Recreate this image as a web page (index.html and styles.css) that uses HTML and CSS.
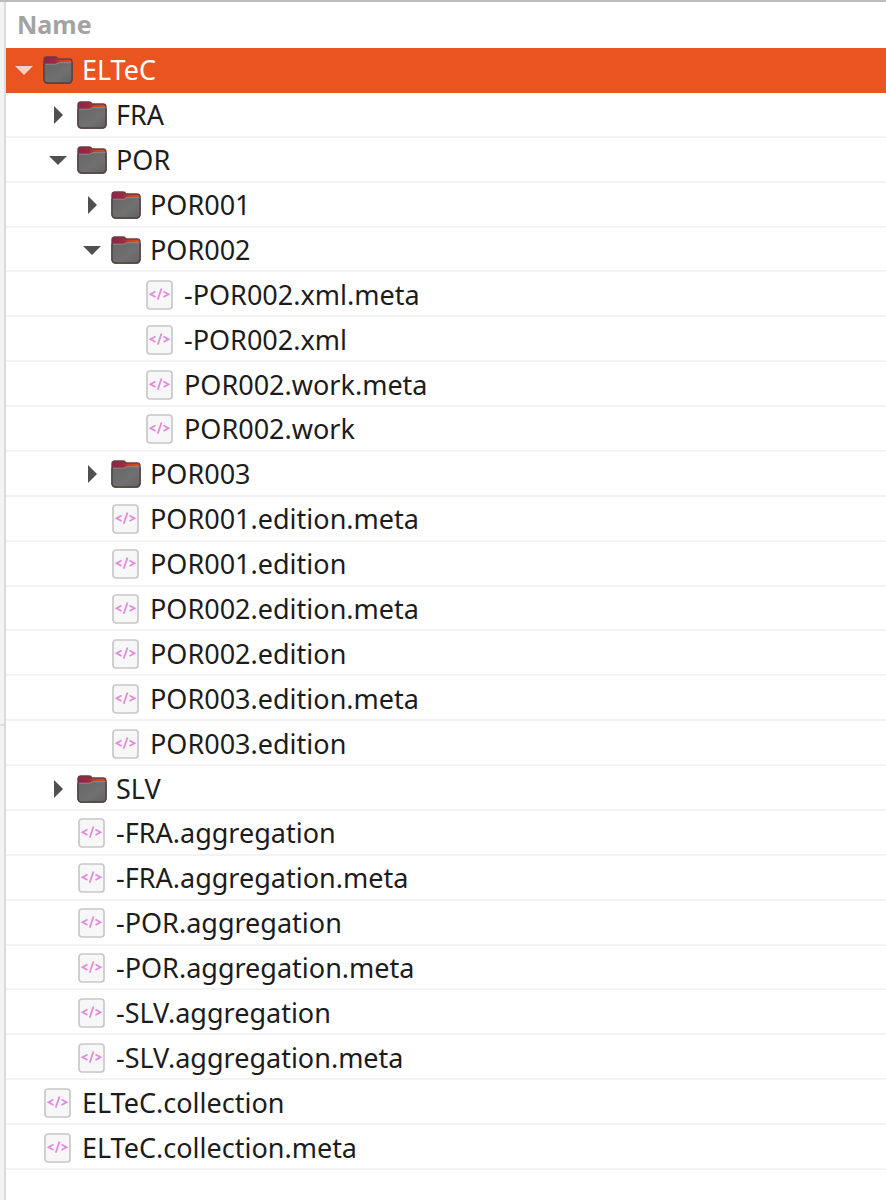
FILE: index.html
```
<!DOCTYPE html>
<html lang="en">
<head>
<meta charset="utf-8">
<title>ELTeC</title>
<link rel="stylesheet" href="styles.css">
</head>
<body>
<svg class="symbols" aria-hidden="true">
  <defs>
    <linearGradient id="tab" x1="0" x2="1" y1="0" y2="0">
      <stop offset="0" stop-color="#90234c"/><stop offset=".4" stop-color="#9c2a40"/><stop offset=".6" stop-color="#c64022"/><stop offset="1" stop-color="#dc4e22"/>
    </linearGradient>
    <linearGradient id="front" x1="0" x2="1" y1="0" y2="1">
      <stop offset="0" stop-color="#666"/><stop offset=".6" stop-color="#707070"/><stop offset="1" stop-color="#626262"/>
    </linearGradient>
  </defs>
  <symbol id="folder" viewBox="0 0 32 32">
    <path d="M2 6Q2 3 5 3H13Q15 3 16 5H27Q30 5 30 8V25Q30 29 26 29H6Q2 29 2 25Z" fill="url(#tab)" stroke="#6b3c40" stroke-width="1.400"/>
    <path d="M2 10H13Q15 10 16 8.500H30V25Q30 29 26 29H6Q2 29 2 25Z" fill="url(#front)"/>
    <path d="M2 10V25Q2 29 6 29H26Q30 29 30 25V9" fill="none" stroke="#4f4344" stroke-width="1.400"/>
    <path d="M3 10.200H13.500Q15 10.200 16.500 8.700H29" fill="none" stroke="#92898a" stroke-width="1"/>
  </symbol>
  <symbol id="file" viewBox="0 0 32 32">
    <rect x="3" y="2" width="25" height="28" rx="3" fill="#f7f7f7" stroke="#c8c8c8" stroke-width="1.700"/>
    <path d="M11.500 12.500L6.500 15.200L11.500 18M19.500 12.500L24.500 15.200L19.500 18M17.500 9.500L13.700 20.800" fill="none" stroke="#e48ade" stroke-width="1.800"/>
  </symbol>
  <symbol id="right" viewBox="0 0 20 20"><path d="M6 1L15 10L6 19Z" fill="#505050"/></symbol>
  <symbol id="down" viewBox="0 0 20 20"><path d="M1 6H19L10 15Z" fill="currentColor"/></symbol>
</svg>
<div class="window">
  <aside class="edge"><div class="edge-top"></div><div class="edge-bottom"></div></aside>
  <main class="pane">
    <h1 class="heading">Name</h1>
    <ul class="tree" id="tree" role="tree" aria-label="Name"></ul>
  </main>
</div>
<script src="tree.js"></script>
</body>
</html>
```
FILE: styles.css
```
* { box-sizing: border-box; }
body {
  margin: 0;
  background: #fff;
  color: #1c1c1c;
  font-family: "Noto Sans", "Open Sans", sans-serif;
  font-size: 27px;
}
.symbols { position: absolute; width: 0; height: 0; }
.window {
  display: flex;
  min-height: 100vh;
  border-top: 2px solid #bcbcbc;
}
.edge {
  display: flex;
  flex-direction: column;
  width: 6px;
  background: #f4f4f4;
  border-right: 2px solid #dcdcdc;
}
.edge-top { flex: 723; border-bottom: 2px solid #dedede; }
.edge-bottom { flex: 475; }
.pane {
  display: flex;
  flex: 1;
  flex-direction: column;
  min-width: 0;
  padding-bottom: 30px;
}
.heading {
  margin: 0;
  padding: 0 0 2px 11px;
  color: #a3a3a3;
  font-size: 25px;
  font-weight: 700;
  line-height: 44px;
}
.tree {
  display: grid;
  flex: 1;
  grid-auto-rows: 1fr;
  margin: 0;
  padding: 0;
  list-style: none;
}
.row {
  display: flex;
  align-items: center;
  padding-top: 2px;
  padding-left: 2px;
  border-bottom: 2px solid #f3f3f3;
  line-height: 36px;
  white-space: nowrap;
}
.level-1 { padding-left: 36px; }
.level-2 { padding-left: 70px; }
.level-3 { padding-left: 104px; }
.selected {
  background: #e95420;
  border-color: #e95420;
  color: #fff;
}
.toggle, .spacer { flex: none; width: 34px; height: 20px; }
.toggle {
  padding: 0 8px 0 6px;
  border: 0;
  background: none;
  color: #505050;
}
.selected .toggle { color: #fbd0bf; }
.arrow { display: block; width: 20px; height: 20px; }
.icon { flex: none; width: 32px; height: 32px; margin-right: 8px; }
```
FILE: tree.js
```
const entries = [
  [0, "open", "ELTeC"],
  [1, "closed", "FRA"],
  [1, "open", "POR"],
  [2, "closed", "POR001"],
  [2, "open", "POR002"],
  [3, "file", "-POR002.xml.meta"],
  [3, "file", "-POR002.xml"],
  [3, "file", "POR002.work.meta"],
  [3, "file", "POR002.work"],
  [2, "closed", "POR003"],
  [2, "file", "POR001.edition.meta"],
  [2, "file", "POR001.edition"],
  [2, "file", "POR002.edition.meta"],
  [2, "file", "POR002.edition"],
  [2, "file", "POR003.edition.meta"],
  [2, "file", "POR003.edition"],
  [1, "closed", "SLV"],
  [1, "file", "-FRA.aggregation"],
  [1, "file", "-FRA.aggregation.meta"],
  [1, "file", "-POR.aggregation"],
  [1, "file", "-POR.aggregation.meta"],
  [1, "file", "-SLV.aggregation"],
  [1, "file", "-SLV.aggregation.meta"],
  [0, "file", "ELTeC.collection"],
  [0, "file", "ELTeC.collection.meta"]
];

document.getElementById("tree").innerHTML = entries.map(([level, kind, name], i) => {
  const file = kind === "file";
  const open = kind === "open";
  const toggle = file
    ? '<span class="spacer"></span>'
    : `<button class="toggle" type="button" aria-label="Toggle ${name}"><svg class="arrow"><use href="#${open ? "down" : "right"}"/></svg></button>`;
  return `<li class="row level-${level}${i ? "" : " selected"}" role="treeitem" aria-level="${level + 1}"${file ? "" : ` aria-expanded="${open}"`}>${toggle}<svg class="icon" aria-hidden="true"><use href="#${file ? "file" : "folder"}"/></svg><span>${name}</span></li>`;
}).join("");
```
